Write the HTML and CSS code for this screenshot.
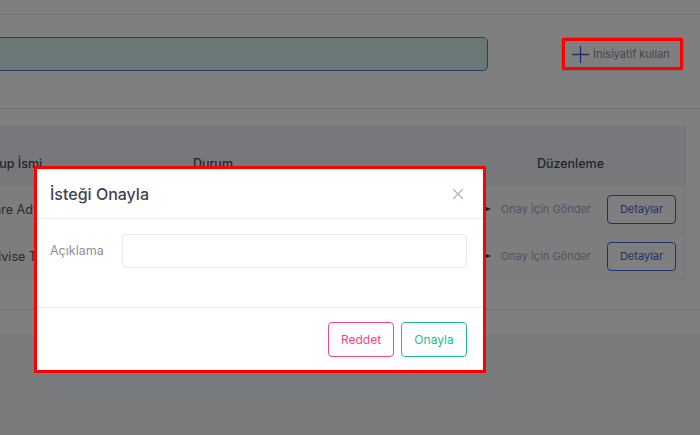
FILE: index.html
```html
<!DOCTYPE html>
<html lang="tr">
<head>
  <meta charset="UTF-8" />
  <meta name="viewport" content="width=device-width, initial-scale=1.0"/>
  <title>İnisiyatifler</title>
  <link rel="stylesheet" href="styles.css">
</head>
<body>
  <div class="page">
    <div class="tabs"></div>

    <div class="toolbar">
      <input class="search" type="text" />
      <button class="btn-add">
        <svg width="17" height="17" viewBox="0 0 17 17"><path d="M8.5 0v17M0 8.5h17" stroke="#3d63dd" stroke-width="1.3" fill="none"/></svg>
        İnisiyatif kullan
      </button>
    </div>

    <div class="list">
      <div class="grid">
        <div class="th">Grup İsmi</div>
        <div class="th">Durum</div>
        <div class="th center">Düzenleme</div>

        <div class="td">Hare Advisory</div>
        <div class="td">Taslak</div>
        <div class="td actions">
          <svg class="send" width="10" height="10" viewBox="0 0 10 10"><path d="M0 1l10 4-10 4 2-4z" fill="#333"/></svg>
          <span class="send-text">Onay İçin Gönder</span>
          <button class="btn-outline">Detaylar</button>
        </div>

        <div class="td">Advise Team</div>
        <div class="td">Taslak</div>
        <div class="td actions">
          <svg class="send" width="10" height="10" viewBox="0 0 10 10"><path d="M0 1l10 4-10 4 2-4z" fill="#333"/></svg>
          <span class="send-text">Onay İçin Gönder</span>
          <button class="btn-outline">Detaylar</button>
        </div>
      </div>
    </div>
  </div>

  <div class="backdrop"></div>

  <div class="modal">
    <div class="modal-header">
      <h3>İsteği Onayla</h3>
      <svg class="close" width="10" height="10" viewBox="0 0 10 10"><path d="M0 0l10 10M10 0L0 10" stroke="#a5a9b8" stroke-width="1.2"/></svg>
    </div>
    <div class="modal-body">
      <label for="note">Açıklama</label>
      <input id="note" type="text" />
    </div>
    <div class="modal-footer">
      <button class="btn-reject">Reddet</button>
      <button class="btn-approve">Onayla</button>
    </div>
  </div>
</body>
</html>
```

FILE: styles.css
```css
body {
  margin: 0;
  font-family: Inter, "Open Sans", sans-serif;
  background: #f5f6fa;
  overflow: hidden;
}
.page {
  background: #fff;
  height: 335px;
  overflow: hidden;
}
.tabs {
  height: 14px;
  border-bottom: 1px solid #e2e2e2;
}
.toolbar {
  display: flex;
  align-items: flex-start;
  gap: 73px;
  height: 71px;
  padding: 22px 16px 0 0;
  border-bottom: 1px solid #e2e2e2;
}
.search {
  flex: 1;
  margin-left: -200px;
  height: 34px;
  box-sizing: border-box;
  border: 1px solid #4f74dc;
  border-radius: 5px;
  background: #d6f0f0;
}
.btn-add {
  position: relative;
  width: 123px;
  height: 34px;
  display: flex;
  align-items: center;
  gap: 4px;
  padding: 0 0 0 10px;
  border: 1px solid #e3e3e3;
  border-radius: 4px;
  background: #fff;
  color: #8e8e98;
  font-family: inherit;
  font-size: 11px;
}
/* red highlight frame, kept above the backdrop */
.btn-add::after {
  content: "";
  position: absolute;
  top: 0;
  left: 0;
  right: 0;
  bottom: 0;
  border: 3px solid #f00;
  z-index: 3;
}
.list {
  padding: 17px 14px 29px 0;
  border-bottom: 1px solid #e2e2e2;
}
.grid {
  display: grid;
  grid-template-columns: 208px 263px 1fr;
  margin-left: -15px;
  border-right: 1px solid #eceef3;
}
.th {
  background: #eef0f7;
  padding: 30px 0 14px;
  line-height: 16px;
  font-size: 12.5px;
  font-weight: 500;
  color: #4a4a57;
}
.center {
  text-align: center;
}
.td {
  height: 46px;
  display: flex;
  align-items: center;
  border-bottom: 1px solid #eceef3;
  background: #fbfbfd;
  font-size: 12.5px;
  color: #555;
}
.actions {
  justify-content: flex-end;
  padding-right: 9px;
}
.send {
  margin-right: 10px;
}
.send-text {
  font-size: 11px;
  color: #a2aac8;
  margin-right: 16px;
}
.btn-outline {
  width: 69px;
  height: 29px;
  border: 1px solid #3d63dd;
  border-radius: 4px;
  background: #fff;
  color: #3d63dd;
  font-family: inherit;
  font-size: 11px;
}
.backdrop {
  position: fixed;
  inset: 0;
  background: rgba(0, 0, 0, 0.5);
  z-index: 1;
}
.modal {
  position: fixed;
  left: 34px;
  top: 166px;
  width: 452px;
  height: 207px;
  box-sizing: border-box;
  border: 3px solid #f00;
  background: #fff;
  display: flex;
  flex-direction: column;
  z-index: 2;
}
.modal-header {
  height: 49px;
  display: flex;
  align-items: center;
  justify-content: space-between;
  padding: 0 20px 0 13px;
  border-bottom: 1px solid #ebedf2;
}
.modal-header h3 {
  margin: 0;
  font-size: 16px;
  font-weight: 500;
  color: #3f4254;
}
.modal-body {
  height: 73px;
  display: flex;
  align-items: flex-start;
  gap: 12px;
  padding: 15px 16px 0 13px;
  border-bottom: 1px solid #ebedf2;
}
.modal-body label {
  width: 60px;
  line-height: 34px;
  font-size: 12.5px;
  color: #8a8fa3;
}
.modal-body input {
  flex: 1;
  height: 34px;
  box-sizing: border-box;
  border: 1px solid #e4e6ef;
  border-radius: 4px;
}
.modal-footer {
  display: flex;
  justify-content: flex-end;
  gap: 7px;
  padding: 14px 16px 0 0;
}
.modal-footer button {
  width: 66px;
  height: 35px;
  border-radius: 4px;
  background: #fff;
  font-family: inherit;
  font-size: 12px;
}
.btn-reject {
  border: 1px solid #f6457f;
  color: #f6457f;
}
.btn-approve {
  border: 1px solid #1bbf8c;
  color: #1bbf8c;
}
```
